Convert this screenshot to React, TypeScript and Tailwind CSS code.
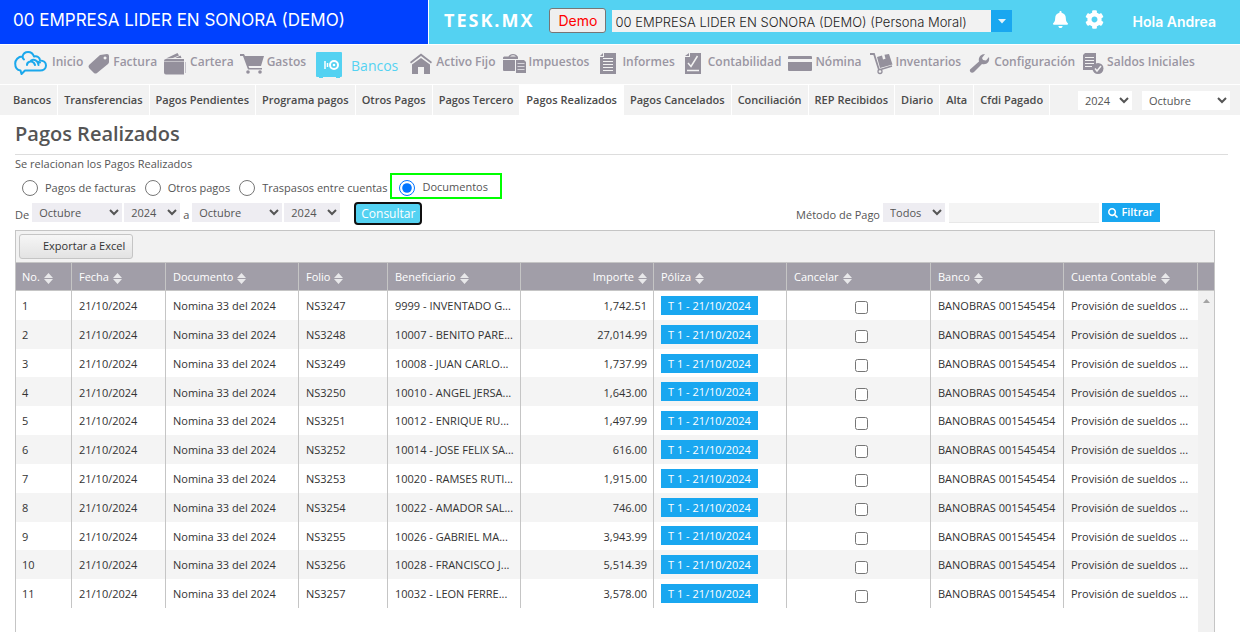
import React from 'react';
import { clsx } from 'clsx';
import { FaBell, FaCog, FaSearch } from 'react-icons/fa';

const COMPANY = '00 EMPRESA LIDER EN SONORA (DEMO)';

const CloudIcon = () => (
  <svg width="35" height="28" viewBox="0 0 35 28" fill="none" stroke="#1ba8ec" strokeWidth="2" strokeLinecap="round" strokeLinejoin="round" className="shrink-0">
    <path d="M11 19.500h15c3.500 0 6-2 6-5s-2.500-5-6-5c0-3-3-5-6-4C18-.500 10-.500 8.500 5.500 4 5.500 1.200 9 1.200 12.500c0 3.500 2 6.500 5.300 7L7.500 23l3.500-3.500" />
    <path d="M8.500 6c.2 1.200.8 2 1.500 2.500M13 14c0-3 4-5 7-2l1 2M17 9.500c3-2 7 0 7.500 4.500M23 10.500l3 1" />
  </svg>
);

const TagIcon = () => (
  <svg width="22" height="28" viewBox="0 0 22 28" className="shrink-0" fill="#94909c">
    <path fillRule="evenodd" d="M12 4l7-1q2 0 2 2v6q0 1-1 2L9 22q-1.500 1-3 0l-5-5q-1-1.500 0-3zM17 5.500a1.500 1.500 0 1 0 .1 0z" />
  </svg>
);

const WalletIcon = () => (
  <svg width="25" height="28" viewBox="0 0 25 28" className="shrink-0" fill="#94909c">
    <path d="M4 7.500L15.500 2l1.500 2.500-6 2.500zM13 7l5.500-2.500 1 2.500z" />
    <path d="M4 8h18v2.500H2V10q0-2 2-2zM2 11h20v12.500H4q-2 0-2-2z" />
    <path d="M23.500 11v11" stroke="#c4c2ca" />
  </svg>
);

const CartIcon = () => (
  <svg width="25" height="28" viewBox="0 0 25 28" className="shrink-0" fill="#94909c">
    <path d="M1 3h4l1 2h19l-3 10H9.500l.8 2H23v1.500H9L4 5H1z" />
    <circle cx="9" cy="21" r="1.800" />
    <circle cx="21" cy="21" r="1.800" />
  </svg>
);

const SafeIcon = () => (
  <svg width="37" height="28" viewBox="0 0 37 28" className="shrink-0">
    <path d="M6 1h24q1 0 1 1v23q0 1-1 1h-1v1h-4v-1H12v1H8v-1H6q-1 0-1-1V2q0-1 1-1z" fill="#54d2f2" />
    <path d="M14 10v8M16.500 12v4" stroke="#fff" strokeWidth="1.500" />
    <circle cx="23" cy="14" r="4" fill="none" stroke="#fff" strokeWidth="2" />
    <circle cx="23" cy="14" r="1.300" fill="#fff" />
  </svg>
);

const HouseIcon = () => (
  <svg width="30" height="28" viewBox="0 0 30 28" className="shrink-0" fill="#94909c">
    <path d="M7 11L18 2.500 29 11l-1 1.500L18 5 8 12.500z" />
    <path d="M9 13.500L18 7l9 6.500V23h-6v-7h-6v7H9z" />
  </svg>
);

const BriefcaseIcon = () => (
  <svg width="25" height="28" viewBox="0 0 25 28" className="shrink-0" fill="#94909c">
    <path d="M3 5.500h4.500q1-2.500 4.500-2.500t4.500 2.500h.5V8H2V6.500zM9 5.500h6q-3-2.500-6 0zM2 9h12v11H3q-1 0-1-1z" fillRule="evenodd" />
    <path d="M15 9h8l2 2v11H15z" />
    <path d="M16.500 12.500h7M16.500 15.500h7M16.500 18.500h7" stroke="#d8d6dc" />
  </svg>
);

const ReportIcon = () => (
  <svg width="25" height="28" viewBox="0 0 25 28" className="shrink-0" fill="#94909c">
    <path d="M10 2h12v21H6V6h4z" />
    <path d="M6 5l3-3v3z" />
    <path d="M9 7.500h10M9 10.500h10M9 13.500h10M9 16.500h10M9 19.500h10" stroke="#f2f2f2" />
  </svg>
);

const ChecklistIcon = () => (
  <svg width="25" height="28" viewBox="0 0 25 28" className="shrink-0" fill="#94909c">
    <path d="M10 2h11v21H5V6h5z" />
    <path d="M5 5l4-3v3z" />
    <path d="M8 12l3 3.500L17.500 5M7 19.500h12" fill="none" stroke="#f2f2f2" strokeWidth="1.500" />
  </svg>
);

const CardIcon = () => (
  <svg width="26" height="28" viewBox="0 0 26 28" className="shrink-0" fill="#94909c">
    <path d="M3 5h22q1 0 1 1v2H2V6q0-1 1-1zM2 11h24v8q0 1-1 1H3q-1 0-1-1z" />
  </svg>
);

const TrolleyIcon = () => (
  <svg width="26" height="28" viewBox="0 0 26 28" className="shrink-0" fill="#94909c">
    <path d="M3 3h4l5 16 13-4" fill="none" stroke="#94909c" strokeWidth="1.800" />
    <path d="M10 6l5-1.500 1 4 2.500-.8-1-4L22 3l3.500 10.500L13 17z" />
    <circle cx="13" cy="20.500" r="2" fill="#f2f2f2" stroke="#94909c" strokeWidth="1.300" />
  </svg>
);

const WrenchIcon = () => (
  <svg width="25" height="28" viewBox="0 0 25 28" className="shrink-0" fill="#94909c">
    <path d="M19 3l-3 4 1 2 3 .5 3-3.500c1 5-2 8-7 7l-8 8c-2 2-5 0-4-2.500l9-8C12 6 15 3 19 3z" />
  </svg>
);

const BalanceIcon = () => (
  <svg width="24" height="28" viewBox="0 0 24 28" className="shrink-0" fill="#94909c">
    <path d="M5 2h11v12q-3 2-3 5H3V4z" />
    <path d="M5 6.500h9M5 9.500h9M5 12.500h9M5 15.500h7" stroke="#f2f2f2" />
    <circle cx="18" cy="17.500" r="5.500" />
    <path d="M15 17.500l2 2.500 4-5" fill="none" stroke="#f2f2f2" strokeWidth="1.500" />
  </svg>
);

const MENU = [
  { label: 'Inicio', icon: CloudIcon },
  { label: 'Factura', icon: TagIcon },
  { label: 'Cartera', icon: WalletIcon },
  { label: 'Gastos', icon: CartIcon },
  { label: 'Bancos', icon: SafeIcon, active: true },
  { label: 'Activo Fijo', icon: HouseIcon },
  { label: 'Impuestos', icon: BriefcaseIcon },
  { label: 'Informes', icon: ReportIcon },
  { label: 'Contabilidad', icon: ChecklistIcon },
  { label: 'Nómina', icon: CardIcon },
  { label: 'Inventarios', icon: TrolleyIcon },
  { label: 'Configuración', icon: WrenchIcon },
  { label: 'Saldos Iniciales', icon: BalanceIcon },
];

const TABS = [
  'Bancos', 'Transferencias', 'Pagos Pendientes', 'Programa pagos', 'Otros Pagos', 'Pagos Tercero',
  'Pagos Realizados', 'Pagos Cancelados', 'Conciliación', 'REP Recibidos', 'Diario', 'Alta', 'Cfdi Pagado',
];

const COLUMNS = [
  { label: 'No.', width: 'w-[56px]' },
  { label: 'Fecha', width: 'w-[94px]' },
  { label: 'Documento', width: 'w-[133px]' },
  { label: 'Folio', width: 'w-[89px]' },
  { label: 'Beneficiario', width: 'w-[133px]' },
  { label: 'Importe', width: 'w-[133px]', right: true },
  { label: 'Póliza', width: 'w-[133px]' },
  { label: 'Cancelar', width: 'w-[144px]' },
  { label: 'Banco', width: 'w-[133px]' },
  { label: 'Cuenta Contable', width: 'w-[134px]' },
];

const PAYMENTS = [
  ['NS3247', '9999 - INVENTADO G...', '1,742.51'],
  ['NS3248', '10007 - BENITO PARE...', '27,014.99'],
  ['NS3249', '10008 - JUAN CARLO...', '1,737.99'],
  ['NS3250', '10010 - ANGEL JERSA...', '1,643.00'],
  ['NS3251', '10012 - ENRIQUE RU...', '1,497.99'],
  ['NS3252', '10014 - JOSE FELIX SA...', '616.00'],
  ['NS3253', '10020 - RAMSES RUTI...', '1,915.00'],
  ['NS3254', '10022 - AMADOR SAL...', '746.00'],
  ['NS3255', '10026 - GABRIEL MA...', '3,943.99'],
  ['NS3256', '10028 - FRANCISCO J...', '5,514.39'],
  ['NS3257', '10032 - LEON FERRE...', '3,578.00'],
];

const SortIcon = () => (
  <svg width="9" height="11" viewBox="0 0 9 11" fill="#e8e8ea" className="mt-[3px] shrink-0">
    <path d="M4.500 0L9 5H0zM0 6h9l-4.500 5z" />
  </svg>
);

interface PickerProps {
  label: string;
  value: string;
  className: string;
}

const Picker: React.FC<PickerProps> = ({ label, value, className }) => (
  <select aria-label={label} defaultValue={value} className={clsx('h-[19px] px-[3px] text-[11px] text-[#555]', className)}>
    <option>{value}</option>
  </select>
);

const Radio: React.FC<{ label: string; checked?: boolean }> = ({ label, checked }) => (
  <label className="flex items-center gap-[7px]">
    <input type="radio" name="tipo" defaultChecked={checked} className="size-4" />
    {label}
  </label>
);

const TextCell: React.FC<{ children: React.ReactNode; className?: string }> = ({ children, className }) => (
  <td className={clsx('border-r border-[#c5c5c5] p-0 pt-[2px] pr-[6px] pl-[7px] first:pl-[6px]', className)}>{children}</td>
);

const Header = () => (
  <header className="flex h-11 font-[Inter,sans-serif]">
    <div className="w-[428px] shrink-0 bg-[#0041ff] pl-[13px] text-[17px] leading-10 whitespace-nowrap text-white">{COMPANY}</div>
    <div className="ml-px flex grow items-start bg-[#54d2f2] pr-6 pl-[15px] whitespace-nowrap">
      <span className="font-['Open_Sans',sans-serif] text-[18px] leading-10 font-bold tracking-[2px] text-white">TESK.MX</span>
      <button className="mt-2 ml-[15px] h-[25px] w-[57px] rounded-[3px] border border-[#767676] bg-[#efefef] text-[14px] leading-5 text-[#f00]">Demo</button>
      <div className="mt-[10px] ml-[6px] flex h-[22px] w-[400px]">
        <input aria-label="Empresa" readOnly value={`${COMPANY} (Persona Moral)`} className="min-w-0 grow bg-[#f2f2f2] px-[3px] pt-1 text-[13px] font-light text-[#222]" />
        <button aria-label="Ver empresas" className="flex w-[21px] items-center justify-center bg-[#19a7f0]">
          <svg width="8" height="5" viewBox="0 0 8 5" fill="#e4f3fb"><path d="M0 0h8L4 4.500z" /></svg>
        </button>
      </div>
      <button aria-label="Avisos" className="mt-[11px] ml-auto text-white"><FaBell size={17} /></button>
      <button aria-label="Ajustes" className="mt-[10px] ml-4 text-white"><FaCog size={19} /></button>
      <span className="ml-[29px] text-[14px] leading-[44px] font-semibold text-white">Hola Andrea</span>
    </div>
  </header>
);

export default function App() {
  return (
    <div className="flex min-h-screen flex-col bg-white font-['Open_Sans',sans-serif] text-[11px] text-[#555]">
      <Header />

      <nav className="mt-px flex h-[39px] items-start gap-[5px] bg-[#f2f2f2] pt-[6px] pl-[14px] whitespace-nowrap">
        {MENU.map(({ label, icon: Icon, active }) => (
          <a key={label} href="#" className="flex gap-[3px]">
            <Icon />
            <span className={active ? 'pt-1 text-[14px] leading-[22px] font-medium text-[#54d2f2]' : 'text-[12px] leading-[21px] font-semibold text-[#9a96a2]'}>{label}</span>
          </a>
        ))}
      </nav>

      <div className="mt-px flex h-[30px] items-center bg-[#f2f2f2] pl-[7px]">
        <nav className="flex h-full font-semibold whitespace-nowrap text-[#4a4a4a]">
          {TABS.map(tab => (
            <a key={tab} href="#" className={clsx('flex items-center border-r border-white px-[6px]', tab === 'Pagos Realizados' && 'bg-white')}>{tab}</a>
          ))}
        </nav>
        <div className="mr-[10px] ml-auto flex gap-[10px]">
          <Picker label="Ejercicio" value="2024" className="w-[54px] bg-white" />
          <Picker label="Periodo" value="Octubre" className="w-[88px] bg-white" />
        </div>
      </div>

      <main className="flex grow flex-col pr-3 pl-[15px]">
        <h1 className="border-b border-[#ddd] pt-[2px] pb-1 text-[20px] leading-[33px] font-semibold">Pagos Realizados</h1>
        <p className="leading-[17px]">Se relacionan los Pagos Realizados</p>

        <div className="flex h-[29px] items-start whitespace-nowrap">
          <div className="flex h-8 items-center gap-[9px] pl-[7px]">
            <Radio label="Pagos de facturas" />
            <Radio label="Otros pagos" />
            <Radio label="Traspasos entre cuentas" />
          </div>
          <div className="mt-px ml-[3px] flex h-[26px] items-center border-2 border-[#0f0] pt-1 pr-3 pb-px pl-[7px]">
            <Radio label="Documentos" checked />
          </div>
        </div>

        <div className="mr-[68px] flex h-[29px] items-start gap-[2px] pt-[2px] whitespace-nowrap">
          <span className="pr-px leading-[23px]">De</span>
          <Picker label="Mes inicial" value="Octubre" className="w-[90px] bg-[#eeedf2]" />
          <Picker label="Año inicial" value="2024" className="w-[56px] bg-[#eeedf2]" />
          <span className="px-[1px] leading-[23px]">a</span>
          <Picker label="Mes final" value="Octubre" className="w-[90px] bg-[#eeedf2]" />
          <Picker label="Año final" value="2024" className="w-[56px] bg-[#eeedf2]" />
          <button className="-mt-px ml-3 h-[23px] w-[68px] rounded-[4px] border-2 border-[#101010] bg-[#54d2f2] text-[12px] leading-[18px] font-medium text-white">Consultar</button>
          <label htmlFor="metodo" className="mr-px ml-auto leading-[23px]">Método de Pago</label>
          <select id="metodo" defaultValue="Todos" className="h-[19px] w-[62px] bg-[#eeedf2] px-[3px] text-[11px]">
            <option>Todos</option>
          </select>
          <input aria-label="Buscar" className="ml-[2px] h-5 w-[150px] border-b border-[#e8e8e8] bg-[#f4f4f4] px-1" />
          <button className="ml-px flex h-[19px] w-[58px] items-center justify-center gap-[3px] bg-[#19a7f0] font-semibold text-white">
            <FaSearch size={10} /> Filtrar
          </button>
        </div>

        <section className="mr-[13px] flex grow flex-col border border-b-0 border-[#c5c5c5]">
          <div className="h-[31px] bg-[#f2f2f2] px-[3px] pt-[3px]">
            <button className="h-[25px] rounded-[3px] border border-[#c5c5c5] bg-linear-to-b from-[#f6f6f6] to-[#e3e3e3] pr-[7px] pl-[23px] text-[#333]">Exportar a Excel</button>
          </div>
          <table className="h-[346px] w-full table-fixed border-separate border-spacing-0 whitespace-nowrap text-[#333]">
            <thead>
              <tr className="h-[29px] bg-[#a19ea8] text-white">
                {COLUMNS.map(col => (
                  <th key={col.label} className={clsx('h-[29px] border-y border-r border-[#c5c5c5] p-0 pt-px pr-[6px] pl-[7px] font-medium first:pl-[6px]', col.width)}>
                    <div className={clsx('flex items-center gap-1', col.right && 'justify-end')}>
                      {col.label} <SortIcon />
                    </div>
                  </th>
                ))}
                <th className="border-y border-[#c5c5c5] p-0" />
              </tr>
            </thead>
            <tbody>
              {PAYMENTS.map(([folio, beneficiary, amount], i) => (
                <tr key={folio} className="odd:bg-white even:bg-[#f4f4f4]">
                  <TextCell>{i + 1}</TextCell>
                  <TextCell>21/10/2024</TextCell>
                  <TextCell>Nomina 33 del 2024</TextCell>
                  <TextCell>{folio}</TextCell>
                  <TextCell>{beneficiary}</TextCell>
                  <TextCell className="text-right">{amount}</TextCell>
                  <td className="border-r border-[#c5c5c5] p-0 pl-[7px]">
                    <a href="#" className="inline-block bg-[#19a7f0] px-[7px] leading-[19px] font-medium text-white">T 1 - 21/10/2024</a>
                  </td>
                  <td className="border-r border-[#c5c5c5] p-0">
                    <div className="flex justify-center pt-[5px] pl-[6px]">
                      <input type="checkbox" aria-label={`Cancelar ${folio}`} className="size-[13px]" />
                    </div>
                  </td>
                  <TextCell>BANOBRAS 001545454</TextCell>
                  <TextCell className="border-r-0">Provisión de sueldos ...</TextCell>
                  {i === 0 && (
                    <td rowSpan={PAYMENTS.length} className="bg-[#f1f1f1] p-0 align-top">
                      <svg width="7" height="4" viewBox="0 0 7 4" fill="#a3a3a3" className="mx-auto mt-2"><path d="M0 4h7L3.500 0z" /></svg>
                    </td>
                  )}
                </tr>
              ))}
            </tbody>
          </table>
          <div className="ml-auto w-4 grow bg-[#f1f1f1]" />
        </section>
      </main>
    </div>
  );
}
